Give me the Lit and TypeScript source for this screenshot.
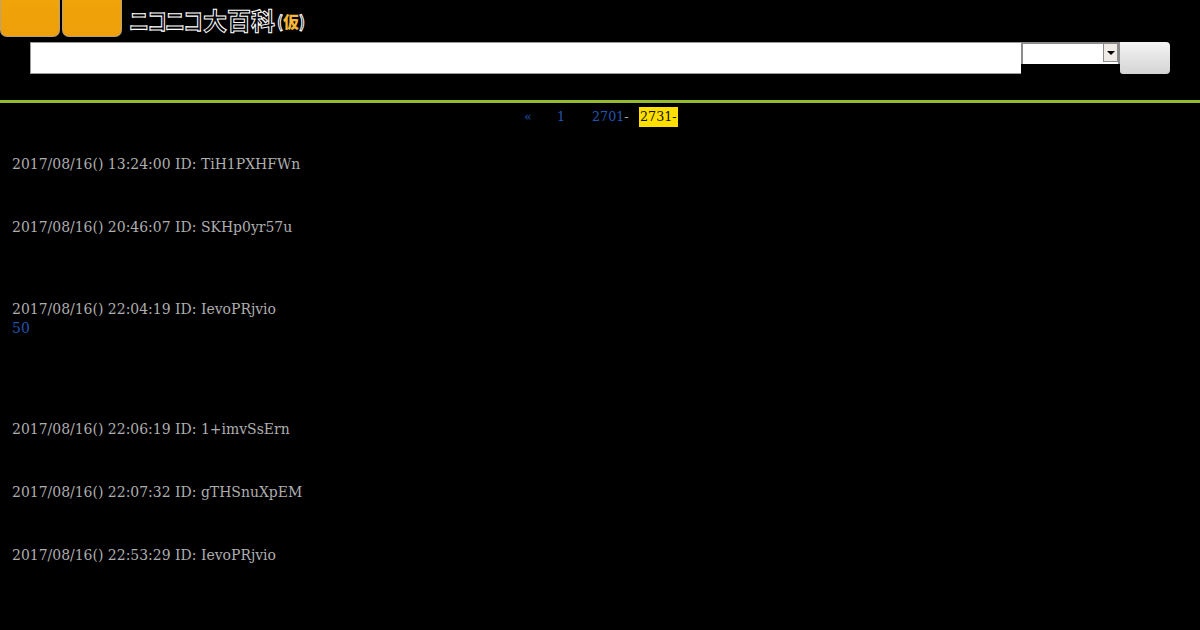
import { LitElement, html, css } from "lit";
import { customElement } from "lit/decorators.js";

const posts = [
  { meta: "2017/08/16() 13:24:00 ID: TiH1PXHFWn", gap: 44 },
  { meta: "2017/08/16() 20:46:07 ID: SKHp0yr57u", gap: 63 },
  { meta: "2017/08/16() 22:04:19 ID: IevoPRjvio", link: "50", gap: 82 },
  { meta: "2017/08/16() 22:06:19 ID: 1+imvSsErn", gap: 44 },
  { meta: "2017/08/16() 22:07:32 ID: gTHSnuXpEM", gap: 44 },
  { meta: "2017/08/16() 22:53:29 ID: IevoPRjvio", gap: 44 },
];

@customElement("app-root")
export class AppRoot extends LitElement {
  static styles = css`
    :host { display: block; width: 1200px; height: 630px; overflow: hidden; background: #000; font-family: "DejaVu Serif", serif; font-size: 13.98px; line-height: 19px; color: #aeaeae; }
    .top { display: flex; height: 37px; align-items: flex-start; }
    .tab { width: 60px; height: 37px; margin-right: 2px; box-sizing: border-box; background: linear-gradient(#f0a408, #ec9f0a); border: 1px solid #b9a27a; border-top: 0; border-radius: 0 0 7px 7px; }
    .logo { display: flex; align-items: center; margin: 5px 0 0 5px; height: 28px; font-family: "Noto Sans CJK JP", sans-serif; font-weight: 700; color: #000; -webkit-text-stroke: 1px #fff; white-space: nowrap; }
    .kana { display: inline-block; font-size: 20px; letter-spacing: -2px; margin-right: 2px; transform: scaleY(1.2); }
    .kanji { font-size: 24px; letter-spacing: 0; }
    .kari { font-size: 16px; margin: 4px 0 0 2px; }
    .kari b { color: #f4b73c; -webkit-text-stroke: 0; }
    .search { display: flex; align-items: flex-start; height: 63px; padding: 5px 0 0 30px; box-sizing: border-box; }
    .query { width: 991px; height: 32px; box-sizing: border-box; background: #fff; border: 1px solid #999; border-right: 0; }
    .select { width: 99px; height: 22px; box-sizing: border-box; background: #fff; border: 2px solid #8c8c8c; border-bottom: 0; display: flex; justify-content: flex-end; }
    .arrow { width: 15px; height: 18px; box-sizing: border-box; background: #efebe7; border: 1px solid #8c8c8c; border-top: 0; display: flex; align-items: center; justify-content: center; }
    .arrow i { width: 0; height: 0; border: 4px solid transparent; border-top: 4px solid #000; border-bottom: 0; }
    .button { width: 50px; height: 32px; background: linear-gradient(#f4f4f4, #d4d4d4); border-radius: 0 4px 4px 3px; }
    .rule { height: 3px; background: #96bc2e; }
    .pager { display: flex; height: 24px; padding: 4px 0 0 524px; box-sizing: border-box; font-size: 12.7px; line-height: 19px; color: #aeaeae; }
    .pager a { color: #2255b0; }
    .pager .cur { background: #ffdf00; color: #111; padding: 0 1px; width: 39px; box-sizing: border-box; }
    .pager .a { width: 33px; } .pager .b { width: 35px; } .pager .c { width: 47px; }
    .posts { padding: 28px 0 0 12px; }
    .meta { white-space: nowrap; }
    .link { color: #2255b0; }
  `;

  render() {
    return html`
      <div class="top">
        <div class="tab"></div><div class="tab"></div>
        <div class="logo"><span class="kana">ニコニコ</span><span class="kanji">大百科</span><span class="kari">(<b>仮</b>)</span></div>
      </div>
      <div class="search">
        <div class="query"></div>
        <div class="select"><div class="arrow"><i></i></div></div>
        <div class="button"></div>
      </div>
      <div class="rule"></div>
      <div class="pager">
        <span class="a"><a>«</a></span><span class="b"><a>1</a></span><span class="c"><a>2701</a>-</span><span class="cur">2731-</span>
      </div>
      <div class="posts">
        ${posts.map(p => html`<div style="margin-bottom:${p.gap}px">
          <div class="meta">${p.meta}</div>
          ${p.link ? html`<div class="link">${p.link}</div>` : ""}
        </div>`)}
      </div>
    `;
  }
}
